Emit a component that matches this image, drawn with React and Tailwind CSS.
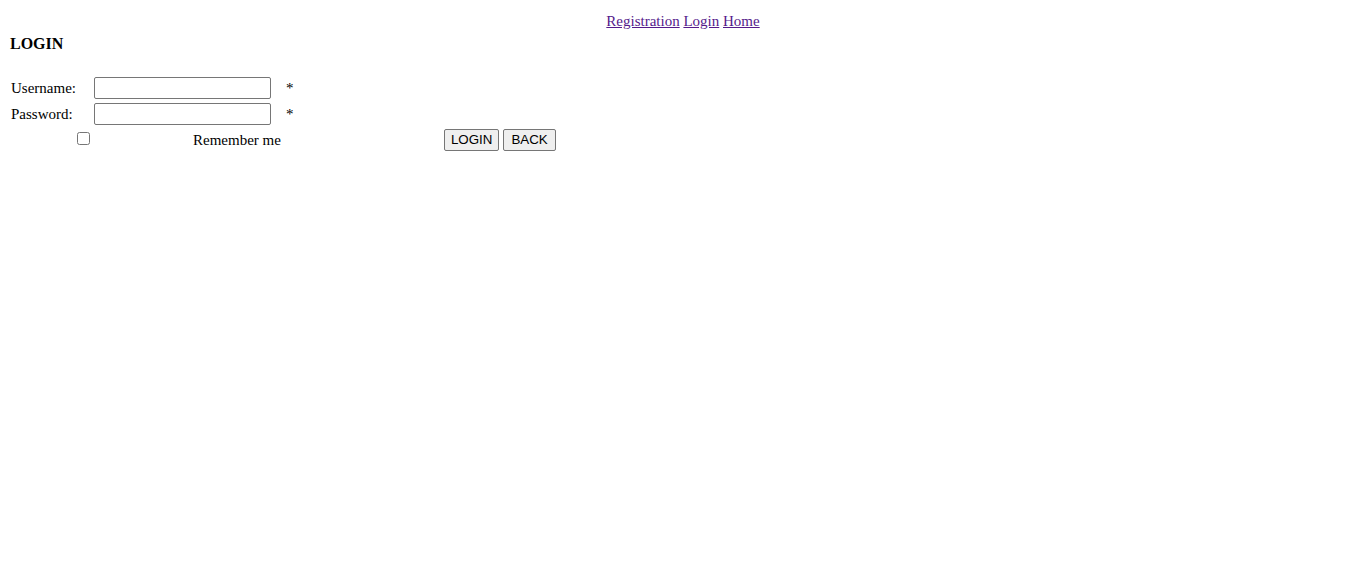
export default function App() {
  return (
    <div className="min-h-screen bg-white text-black font-['Liberation_Serif',serif] text-[15px]">
      {/* top nav */}
      <div className="pt-[12px] text-center leading-[18px]">
        <a href="#" className="text-[#551a8b] underline">Registration</a>{' '}
        <a href="#" className="text-[#551a8b] underline">Login</a>{' '}
        <a href="#" className="text-[#551a8b] underline">Home</a>
      </div>

      <div className="pl-[10px] pt-[5px] text-[16px] font-bold leading-[18px]">LOGIN</div>

      <div className="pt-[24px] pl-[11px] flex flex-col gap-[4px]">
        <div className="flex items-center h-[22px]">
          <span className="w-[83px]">Username:</span>
          <input type="text" className="w-[177px] h-[22px] border border-[#767676] rounded-[2px] bg-white" />
          <span className="ml-[15px]">*</span>
        </div>
        <div className="flex items-center h-[22px]">
          <span className="w-[83px]">Password:</span>
          <input type="password" className="w-[177px] h-[22px] border border-[#767676] rounded-[2px] bg-white" />
          <span className="ml-[15px]">*</span>
        </div>
        <div className="flex items-center h-[22px]">
          <input type="checkbox" className="ml-[66px] w-[13px] h-[13px] -mt-[3px]" />
          <span className="ml-[103px]">Remember me</span>
          <div className="ml-[163px] flex gap-[4px] font-['Liberation_Sans',sans-serif] text-[13.333px]">
            <button className="h-[22px] px-[6px] bg-[#efefef] border border-[#767676] rounded-[2px]">LOGIN</button>
            <button className="h-[22px] px-[7px] bg-[#efefef] border border-[#767676] rounded-[2px]">BACK</button>
          </div>
        </div>
      </div>
    </div>
  )
}
